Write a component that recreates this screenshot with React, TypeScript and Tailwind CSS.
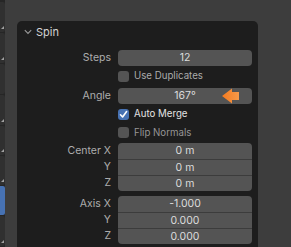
import React from "react";

const font = { fontFamily: "Inter, 'Noto Sans', sans-serif" };

function Field({ value, className = "" }: { value: string; className?: string }) {
  return (
    <div
      className={`h-[16px] w-[134px] bg-[#545454] flex items-center justify-center text-[10.5px] text-[#dcdcdc] ${className}`}
    >
      {value}
    </div>
  );
}

function Check({ label, checked, color }: { label: string; checked?: boolean; color: string }) {
  return (
    <div className="flex items-center gap-[5px]">
      <div
        className={`w-[11px] h-[11px] rounded-[3px] flex items-center justify-center ${
          checked ? "bg-[#4772b3]" : "bg-[#545454]"
        }`}
      >
        {checked && (
          <svg width="9" height="9" viewBox="0 0 9 9">
            <path d="M1.5 4.8 L3.6 7 L7.6 1.6" fill="none" stroke="#fff" strokeWidth="1.6" strokeLinecap="round" strokeLinejoin="round" />
          </svg>
        )}
      </div>
      <span className="text-[9.7px]" style={{ color }}>
        {label}
      </span>
    </div>
  );
}

function Row({ label, h, children }: { label?: string; h: string; children: React.ReactNode }) {
  return (
    <div className={`flex items-center ${h}`}>
      <div className="w-[94px] text-right text-[10.5px] text-[#adadad]">{label}</div>
      <div className="ml-[7px]">{children}</div>
    </div>
  );
}

function Group({ labels, values }: { labels: string[]; values: string[] }) {
  return (
    <div className="flex">
      <div className="w-[94px] flex flex-col">
        {labels.map((l) => (
          <div key={l} className="h-[16px] flex items-center justify-end text-[10.5px] text-[#adadad]">
            {l}
          </div>
        ))}
      </div>
      <div className="ml-[7px] flex flex-col rounded-[4px] overflow-hidden">
        {values.map((v, i) => (
          <Field key={i} value={v} className={i > 0 ? "border-t border-[#3c3c3c]" : ""} />
        ))}
      </div>
    </div>
  );
}

const stripButtons = [30, 30, 30, 30, 29, 29, 29, 30];

export default function App() {
  return (
    <div className="w-[291px] h-[247px] bg-[#3d3d3d] flex overflow-hidden" style={font}>
      <div className="w-[5px] flex flex-col gap-[1px] pt-[2px] bg-[#262626]">
        {stripButtons.map((h, i) => (
          <div
            key={i}
            className={`relative rounded-r-[2px] ${i === 6 ? "bg-[#4772b3]" : "bg-[#303030]"}`}
            style={{ height: h }}
          >
            {i !== 6 && i !== 2 && (
              <svg className="absolute right-[1px] bottom-[3px]" width="3" height="3" viewBox="0 0 3 3">
                <path d="M3 0 L3 3 L0 3 Z" fill="#a0a0a0" />
              </svg>
            )}
          </div>
        ))}
      </div>

      <div className="ml-[12px] mt-[21px] w-[241px] bg-[#1d1d1d] rounded-t-[5px] flex flex-col">
        <div className="h-[22px] flex items-center pl-[7px] gap-[4px]">
          <svg width="8" height="6" viewBox="0 0 8 6">
            <path d="M0.8 1.2 L4 4.4 L7.2 1.2" fill="none" stroke="#9a9a9a" strokeWidth="1.1" />
          </svg>
          <span className="text-[11px] text-[#d4d4d4]">Spin</span>
        </div>

        <div className="pt-[6px] flex flex-col">
          <Row label="Steps" h="h-[18px]">
            <Field value="12" className="rounded-[4px]" />
          </Row>
          <Row h="h-[19px]">
            <Check label="Use Duplicates" color="#ababab" />
          </Row>
          <Row label="Angle" h="h-[19px]">
            <div className="relative">
              <Field value="167°" className="rounded-[4px]" />
              <svg className="absolute left-[104px] top-0" width="18" height="16" viewBox="0 0 18 16">
                <defs>
                  <linearGradient id="og" x1="0" y1="0" x2="1" y2="0">
                    <stop offset="0" stopColor="#f47a1f" />
                    <stop offset="1" stopColor="#f59a4a" />
                  </linearGradient>
                </defs>
                <path d="M0 8 L10 0.5 L10 4 L17 4 L17 12 L10 12 L10 15.5 Z" fill="url(#og)" />
              </svg>
            </div>
          </Row>
          <Row h="h-[19px]">
            <Check label="Auto Merge" checked color="#e4e4e4" />
          </Row>
          <Row h="h-[18px]">
            <Check label="Flip Normals" color="#969696" />
          </Row>

          <div className="mt-[1px]">
            <Group labels={["Center X", "Y", "Z"]} values={["0 m", "0 m", "0 m"]} />
          </div>
          <div className="mt-[5px]">
            <Group labels={["Axis X", "Y", "Z"]} values={["-1.000", "0.000", "0.000"]} />
          </div>
        </div>
      </div>
    </div>
  );
}
